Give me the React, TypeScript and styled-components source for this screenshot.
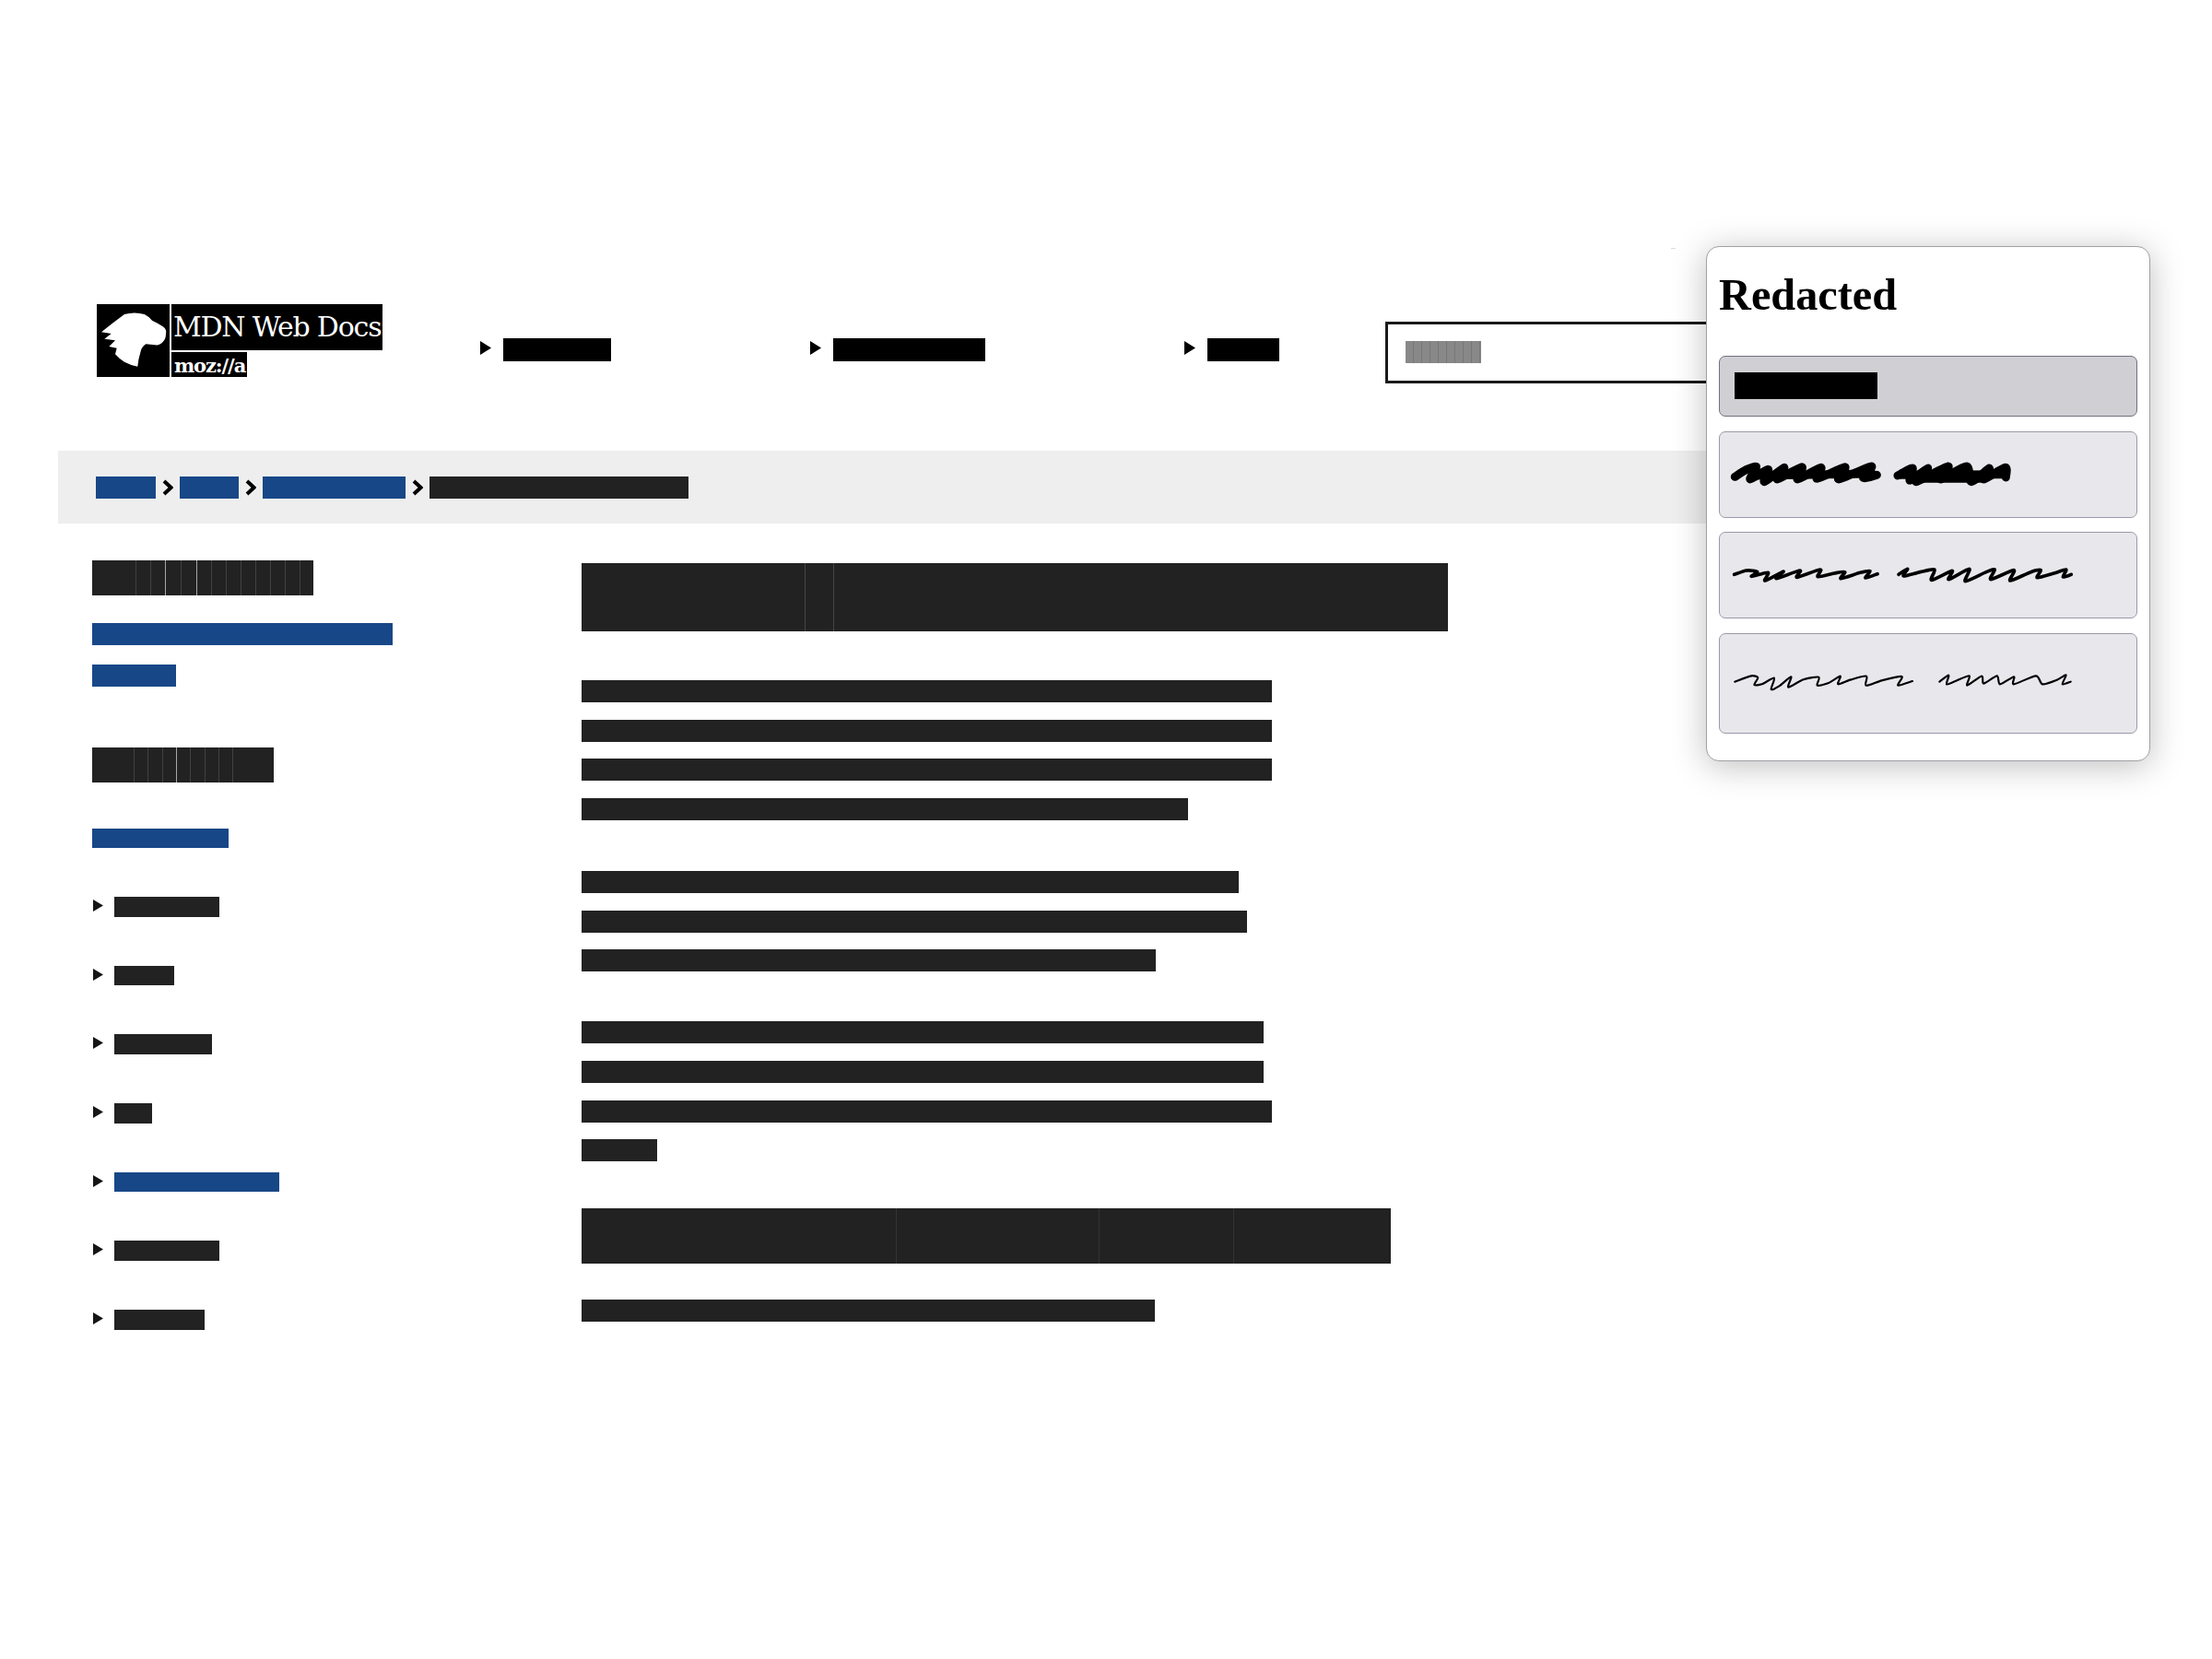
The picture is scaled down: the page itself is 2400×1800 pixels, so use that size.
import React from "react";
import styled, { createGlobalStyle } from "styled-components";

const Global = createGlobalStyle`
  html, body { margin: 0; padding: 0; background: #fff; }
  body { font-family: "Liberation Sans", Arial, sans-serif; }
`;

const DARK = "#222222";
const BLUE = "#184787";

const Page = styled.div`
  position: relative;
  width: 2400px;
  height: 1800px;
  overflow: hidden;
  background: #fff;
`;

const Header = styled.header`
  display: grid;
  grid-template-columns: 416px 358px 406px 218px 360px;
  align-items: start;
  height: 159px;
  padding: 330px 0 0 105px;
`;

const Logo = styled.a`
  display: flex;
  gap: 2px;
  height: 79px;
`;
const LogoMark = styled.svg`
  display: block;
  width: 79px;
  height: 79px;
  background: #000;
`;
const LogoColumn = styled.div`
  display: flex;
  flex-direction: column;
  align-items: flex-start;
  gap: 2px;
`;
const LogoName = styled.span`
  display: block;
  box-sizing: border-box;
  width: 229px;
  height: 50px;
  padding-left: 2px;
  overflow: hidden;
  background: #000;
  color: #fff;
  font: 400 30px/50px "DejaVu Serif", serif;
  letter-spacing: -1.2px;
  white-space: nowrap;
`;
const LogoMoz = styled.span`
  display: block;
  box-sizing: border-box;
  width: 82px;
  height: 27px;
  padding-left: 3px;
  overflow: hidden;
  background: #000;
  color: #fff;
  font: 700 21px/29px "DejaVu Serif", serif;
  letter-spacing: -1.1px;
  white-space: nowrap;
`;

const NavItem = styled.div`
  display: flex;
  align-items: flex-start;
  gap: 13px;
  margin-top: 37px;
`;
const NavArrow = styled.svg`
  display: block;
  width: 12px;
  height: 15px;
  margin-top: 3px;
  fill: #000;
`;
const NavBar = styled.div<{ $w: number }>`
  width: ${(p) => p.$w}px;
  height: 25px;
  background: #000;
`;

const Search = styled.div`
  box-sizing: border-box;
  height: 67px;
  margin-top: 19px;
  padding: 18px 0 0 19px;
  border: 3px solid #1a1a1a;
`;
const Placeholder = styled.div`
  width: 82px;
  height: 24px;
  background: repeating-linear-gradient(
    90deg,
    #888 0,
    #888 8px,
    #777 8px,
    #777 9px
  );
`;

const Crumbs = styled.nav`
  display: flex;
  align-items: center;
  box-sizing: border-box;
  width: 1797px;
  height: 79px;
  margin-left: 63px;
  padding: 0 0 0 41px;
  background: #eeeeee;
`;
const CrumbLink = styled.div<{ $w: number }>`
  width: ${(p) => p.$w}px;
  height: 24px;
  background: ${BLUE};
`;
const CrumbCurrent = styled.div<{ $w: number }>`
  width: ${(p) => p.$w}px;
  height: 24px;
  background: ${DARK};
`;
const Chevron = styled.svg`
  display: block;
  width: 12px;
  height: 18px;
  margin: 0 7px;
  fill: none;
  stroke: #000;
  stroke-width: 4;
`;

const Body = styled.div`
  display: flex;
  padding-left: 100px;
`;
const Sidebar = styled.aside`
  display: flex;
  flex-direction: column;
  align-items: flex-start;
  width: 531px;
  padding-top: 40px;
`;
const Segments = styled.div<{ $h: number; $mb?: number }>`
  display: flex;
  height: ${(p) => p.$h}px;
  margin-bottom: ${(p) => p.$mb ?? 0}px;
  background: ${DARK};
`;
const Segment = styled.span<{ $w: number; $line?: number }>`
  box-sizing: border-box;
  width: ${(p) => p.$w}px;
  height: 100%;
  border-left: 1px solid rgba(255, 255, 255, ${(p) => p.$line ?? 0.14});
`;
const SideLink = styled.div<{ $w: number; $h: number; $mb: number }>`
  width: ${(p) => p.$w}px;
  height: ${(p) => p.$h}px;
  margin-bottom: ${(p) => p.$mb}px;
  background: ${BLUE};
`;
const Tree = styled.ul`
  display: flex;
  flex-direction: column;
  gap: 53px;
  margin: 0;
  padding: 0;
  list-style: none;
`;
const TreeRow = styled.li`
  display: flex;
  align-items: flex-start;
  gap: 12px;
  height: 21.67px;
  padding-left: 1px;
`;
const TreeArrow = styled.svg`
  display: block;
  width: 11px;
  height: 13px;
  margin-top: 3px;
  fill: #161616;
`;
const TreeBar = styled.div<{ $w: number; $active?: boolean }>`
  width: ${(p) => p.$w}px;
  height: 21.67px;
  background: ${(p) => (p.$active ? BLUE : DARK)};
`;

const Article = styled.main`
  display: flex;
  flex-direction: column;
  align-items: flex-start;
  padding-top: 43px;
`;
const Paragraph = styled.div<{ $mb: number }>`
  display: flex;
  flex-direction: column;
  gap: 18.67px;
  margin-bottom: ${(p) => p.$mb}px;
`;
const Line = styled.div<{ $w: number }>`
  width: ${(p) => p.$w}px;
  height: 24px;
  background: ${DARK};
`;

const Panel = styled.section`
  position: absolute;
  left: 1851px;
  top: 267px;
  box-sizing: border-box;
  display: flex;
  flex-direction: column;
  width: 482px;
  height: 559px;
  padding: 25px 13px 0;
  border: 1.5px solid #a0a0a5;
  border-radius: 14px;
  background: #fff;
  box-shadow: 0 5px 36px rgba(0, 0, 0, 0.26);
`;
const PanelTitle = styled.h2`
  margin: 0 0 40px;
  color: #000;
  font: 700 48.3px/53px "Liberation Serif", "Times New Roman", serif;
`;
const Options = styled.div`
  display: flex;
  flex-direction: column;
  gap: 15.5px;
`;
const Option = styled.div<{ $h: number; $top: number; $selected?: boolean }>`
  box-sizing: border-box;
  height: ${(p) => p.$h}px;
  padding: ${(p) => p.$top}px 0 0 ${(p) => (p.$selected ? 16 : 9)}px;
  border: 1px solid ${(p) => (p.$selected ? "#72707f" : "#9b99a8")};
  border-radius: 7px;
  background: ${(p) => (p.$selected ? "#d0cfd4" : "#e8e8ec")};
`;
const OptionBar = styled.div`
  width: 155px;
  height: 29px;
  background: #000;
`;
const Scribble = styled.svg<{ $stroke: number }>`
  display: block;
  width: 380px;
  fill: none;
  stroke: #000;
  stroke-width: ${(p) => p.$stroke};
  stroke-linecap: round;
  stroke-linejoin: round;
`;
const Speck = styled.div`
  position: absolute;
  left: 1813px;
  top: 269px;
  width: 5px;
  height: 1px;
  background: #dcdcdc;
`;

/* Catmull-Rom through the traced points, so the crests and hooks keep their height */
const smooth = (pts: number[][]) => {
  let d = `M${pts[0][0]} ${pts[0][1]}`;
  for (let i = 0; i < pts.length - 1; i++) {
    const p0 = pts[Math.max(i - 1, 0)];
    const p1 = pts[i];
    const p2 = pts[i + 1];
    const p3 = pts[Math.min(i + 2, pts.length - 1)];
    const k = 0.13;
    d += ` C${p1[0] + (p2[0] - p0[0]) * k} ${p1[1] + (p2[1] - p0[1]) * k} ${p2[0] - (p3[0] - p1[0]) * k} ${p2[1] - (p3[1] - p1[1]) * k} ${p2[0]} ${p2[1]}`;
  }
  return d;
};

const SCRIBBLE_THICK = [
  [[22, 82], [60, 58], [92, 50], [72, 90], [130, 58], [118, 98], [182, 52], [160, 90], [240, 50], [226, 90], [302, 52], [290, 88], [380, 50], [360, 90], [466, 48], [440, 86], [484, 76]],
  [[80, 78], [470, 72]],
  [[552, 78], [600, 54], [592, 94], [650, 54], [612, 98], [716, 48], [692, 90], [776, 48], [792, 98], [850, 54], [832, 90], [902, 52], [904, 84]],
  [[560, 76], [900, 74]],
  [[600, 88], [820, 88]],
];
const SCRIBBLE_MEDIUM = [
  [[20, 400], [60, 387], [95, 391], [76, 406], [130, 394], [120, 420], [180, 390], [157, 413], [234, 387], [224, 409], [300, 384], [292, 407], [345, 396], [380, 392], [367, 413], [430, 394], [462, 389], [447, 411], [486, 398]],
  [[555, 400], [584, 382], [571, 405], [625, 392], [672, 384], [662, 418], [729, 388], [718, 416], [785, 382], [772, 422], [840, 392], [868, 384], [855, 416], [930, 386], [918, 420], [985, 392], [1018, 386], [1006, 410], [1060, 396], [1100, 384], [1090, 408], [1117, 400]],
];
const SCRIBBLE_THIN = [
  [[22, 120], [75, 101], [97, 107], [85, 130], [110, 128], [150, 108], [140, 145], [165, 135], [205, 104], [196, 138], [245, 113], [295, 105], [290, 132], [325, 125], [365, 102], [358, 128], [400, 113], [450, 102], [449, 132], [500, 116], [565, 103], [553, 132], [600, 118]],
  [[688, 120], [718, 99], [711, 128], [740, 118], [785, 101], [778, 132], [825, 102], [832, 126], [875, 101], [885, 128], [930, 104], [930, 128], [1002, 101], [1023, 128], [1070, 114], [1100, 98], [1088, 128], [1115, 120]],
];

const navItems = [117, 165, 78];
const treeItems: { w: number; active?: boolean }[] = [
  { w: 114 },
  { w: 65 },
  { w: 106 },
  { w: 41 },
  { w: 179, active: true },
  { w: 114 },
  { w: 98 },
];

export default function App() {
  return (
    <Page>
      <Global />
      <Header>
        <Logo>
          <LogoMark viewBox="0 0 79 79" aria-hidden>
            <path
              fill="#fff"
              d="M30 11 Q41 8 51.7 11 Q56 13 60 17.7 Q67 21 71.7 24.3 Q76 27 75 32 Q75 38 71.7 41 Q68 45 63.3 44.3 L53.3 43.3 Q49 46 47.7 51 Q45 60 44.3 67.7 Q36 66 30 62.7 Q24 59 20 54.3 L21.7 47.7 L13.3 46 L20 39.3 L8.3 37.7 L15.7 32 L5 30.3 L16.7 21 Z"
            />
          </LogoMark>
          <LogoColumn>
            <LogoName>MDN Web Docs</LogoName>
            <LogoMoz>moz://a</LogoMoz>
          </LogoColumn>
        </Logo>
        {navItems.map((w) => (
          <NavItem key={w}>
            <NavArrow viewBox="0 0 12 15"><polygon points="0,0 12,7.5 0,15" /></NavArrow>
            <NavBar $w={w} />
          </NavItem>
        ))}
        <Search>
          <Placeholder />
        </Search>
      </Header>

      <Crumbs>
        <CrumbLink $w={65} />
        <Chevron viewBox="0 0 12 18"><path d="M2 2 L9.5 9 L2 16" /></Chevron>
        <CrumbLink $w={64} />
        <Chevron viewBox="0 0 12 18"><path d="M2 2 L9.5 9 L2 16" /></Chevron>
        <CrumbLink $w={155} />
        <Chevron viewBox="0 0 12 18"><path d="M2 2 L9.5 9 L2 16" /></Chevron>
        <CrumbCurrent $w={281} />
      </Crumbs>

      <Body>
        <Sidebar>
          <Segments $h={38} $mb={30}>
            <Segment $w={47} $line={0} />
            <Segment $w={16} />
            <Segment $w={16} />
            <Segment $w={17} $line={0.6} />
            <Segment $w={17} />
            <Segment $w={16} $line={0.6} />
            <Segment $w={16} />
            <Segment $w={16} />
            <Segment $w={16} />
            <Segment $w={16} />
            <Segment $w={16} />
            <Segment $w={16} />
            <Segment $w={15} />
          </Segments>
          <SideLink $w={326} $h={24} $mb={21} />
          <SideLink $w={91} $h={24} $mb={66} />
          <Segments $h={38} $mb={50}>
            <Segment $w={45} $line={0} />
            <Segment $w={15} />
            <Segment $w={16} />
            <Segment $w={15} />
            <Segment $w={15} $line={0.6} />
            <Segment $w={16} />
            <Segment $w={15} />
            <Segment $w={15} />
            <Segment $w={45} />
          </Segments>
          <SideLink $w={148} $h={21} $mb={53} />
          <Tree>
            {treeItems.map((t, i) => (
              <TreeRow key={i}>
                <TreeArrow viewBox="0 0 11 13"><polygon points="0,0 11,6.5 0,13" /></TreeArrow>
                <TreeBar $w={t.w} $active={t.active} />
              </TreeRow>
            ))}
          </Tree>
        </Sidebar>

        <Article>
          <Segments $h={74} $mb={53}>
            <Segment $w={242} $line={0} />
            <Segment $w={31} $line={0.16} />
            <Segment $w={667} $line={0.16} />
          </Segments>
          <Paragraph $mb={55}>
            {[749, 749, 749, 658].map((w, i) => (
              <Line key={i} $w={w} />
            ))}
          </Paragraph>
          <Paragraph $mb={54}>
            {[713, 722, 623].map((w, i) => (
              <Line key={i} $w={w} />
            ))}
          </Paragraph>
          <Paragraph $mb={51}>
            {[740, 740, 749, 82].map((w, i) => (
              <Line key={i} $w={w} />
            ))}
          </Paragraph>
          <Segments $h={60} $mb={39}>
            <Segment $w={341} $line={0} />
            <Segment $w={220} $line={0.08} />
            <Segment $w={146} $line={0.08} />
            <Segment $w={171} $line={0.08} />
          </Segments>
          <Line $w={622} />
        </Article>
      </Body>

      <Speck />
      <Panel>
        <PanelTitle>Redacted</PanelTitle>
        <Options>
          <Option $h={66} $top={17} $selected>
            <OptionBar />
          </Option>
          <Option $h={94} $top={21}>
            <Scribble $stroke={27} viewBox="0 0 1140 150" height={50}>
              {SCRIBBLE_THICK.map((p, i) => <path key={i} d={smooth(p)} />)}
            </Scribble>
          </Option>
          <Option $h={94} $top={32}>
            <Scribble $stroke={11} viewBox="0 360 1140 90" height={30}>
              {SCRIBBLE_MEDIUM.map((p, i) => <path key={i} d={smooth(p)} />)}
            </Scribble>
          </Option>
          <Option $h={109} $top={35}>
            <Scribble $stroke={6.5} viewBox="0 70 1140 90" height={30}>
              {SCRIBBLE_THIN.map((p, i) => <path key={i} d={smooth(p)} />)}
            </Scribble>
          </Option>
        </Options>
      </Panel>
    </Page>
  );
}
